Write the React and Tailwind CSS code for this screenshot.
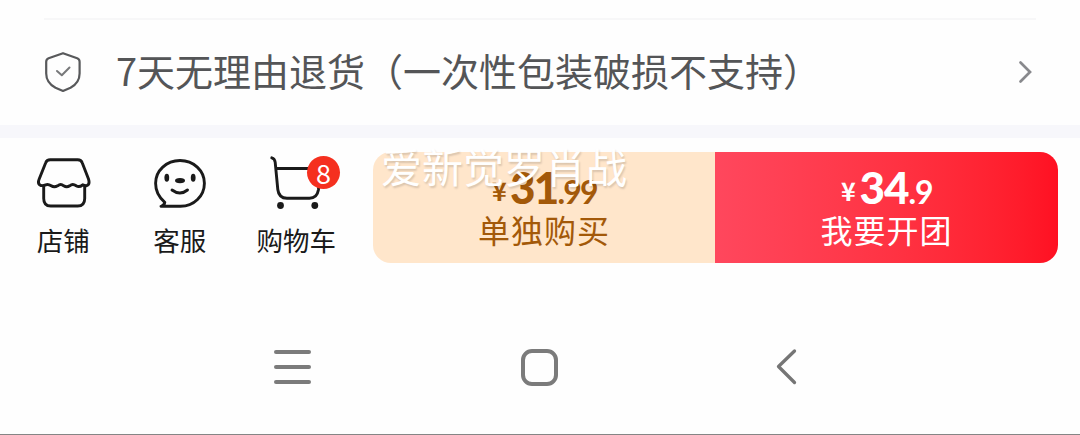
const tabs = [
  { label: '店铺', icon: ShopIcon },
  { label: '客服', icon: ServiceIcon },
  { label: '购物车', icon: CartIcon, badge: 8 },
]

function ShieldIcon() {
  return (
    <svg width="38" height="42" viewBox="0 0 38 42" fill="none" strokeLinecap="round" strokeLinejoin="round">
      <path
        d="M19 2.2 L33.2 7.2 Q35.6 8.1 35.6 10.8 V22.5 C35.6 30 32 33.8 26.5 36.8 L19 40 L11.5 36.8 C6 33.8 2.2 30 2.2 22.5 V10.8 Q2.2 8.1 4.6 7.2 Z"
        stroke="#58595b"
        strokeWidth="2.2"
      />
      <path d="M13 20 L17.8 24.3 L25.5 16.5" stroke="#77787a" strokeWidth="2" />
    </svg>
  )
}

function ShopIcon() {
  return (
    <svg width="56" height="54" viewBox="-1.2 0 56 54" fill="none" stroke="#1a1a1a" strokeWidth="2.9" strokeLinejoin="round">
      <path d="M14 4.8 H41.5 Q45 4.8 46 7.8 L52.3 24 Q54 29.5 50.5 30.7 Q48.5 30.8 46.5 29.8 Q43 32.8 40 30.8 Q36.5 28.3 33.5 30.8 Q30.5 32.8 27.5 30.8 Q24.5 28.3 21.5 30.8 Q18 32.8 15 30.8 Q12 28.8 9.5 29.8 Q6.5 31 4.5 30.5 Q1 29 3 24 L9.5 7.8 Q10.5 4.8 14 4.8 Z" />
      <path d="M7.5 30.5 V43.5 Q7.5 51 14.5 51 H41.5 Q48.5 51 48.5 43.5 V30.5" />
    </svg>
  )
}

function ServiceIcon() {
  return (
    <svg width="56" height="54" viewBox="-0.5 0 56 54" fill="none" stroke="#1a1a1a" strokeWidth="2.9" strokeLinecap="round" strokeLinejoin="round">
      <path d="M8.5 51.3 H28 C41.5 51.3 51.9 41 51.9 28.3 C51.9 15.5 41 5.5 27.5 5.5 C14 5.5 3.1 15.5 3.1 28.3 C3.1 36 6.5 42.5 12.3 47.3 Q11.8 50.5 8.5 51.3 Z" />
      <path d="M19.5 35 Q27.5 41 35 35" />
      <g fill="#1a1a1a" stroke="none">
        <ellipse cx="14.3" cy="22.8" rx="2.4" ry="4" />
        <ellipse cx="40.7" cy="22.8" rx="2.4" ry="4" />
        <ellipse cx="27.5" cy="25.6" rx="5" ry="2.7" />
      </g>
    </svg>
  )
}

function CartIcon() {
  return (
    <svg width="56" height="54" viewBox="-2 0 56 54" fill="none" stroke="#1a1a1a" strokeWidth="2.9" strokeLinecap="round" strokeLinejoin="round">
      <path d="M1.8 2.8 Q4.8 3.6 5.2 7.3 L7.8 34.5 Q8.8 43.2 17 43.2 H39.5 Q47 43.2 48.4 35 L51 13.5 H6.2" />
      <circle cx="10.5" cy="50.5" r="3.4" fill="#1a1a1a" stroke="none" />
      <circle cx="44.8" cy="50.5" r="3.4" fill="#1a1a1a" stroke="none" />
    </svg>
  )
}

function Price({ whole, cents, className }) {
  return (
    <div className={`flex items-baseline justify-center h-[40px] leading-[40px] font-[Lato] font-bold ${className}`}>
      <span className="relative -top-[3px] w-[15px] mr-[4px] text-[25px] font-['Noto_Sans_CJK_SC',sans-serif] font-bold">¥</span>
      <span className="text-[44px] font-black">{whole}</span>
      <span className="text-[32px]">.{cents}</span>
    </div>
  )
}

function App() {
  return (
    <div className="flex flex-col w-[1080px] h-[435px] overflow-hidden bg-[#fefefe] border-b border-[#858585] font-['Noto_Sans_CJK_SC',sans-serif]">
      {/* Return policy */}
      <div className="mx-[44px] mt-[18px] h-[107px] pb-[2px] border-t-2 border-[#f7f7f8] flex items-center">
        <ShieldIcon />
        <span className="-mt-[3px] ml-[34px] text-[38px] leading-[50px] text-[#545557] whitespace-nowrap">
          7天无理由退货（一次性包装破损不支持）
        </span>
        <svg className="ml-auto mr-1" width="14" height="24" viewBox="0 0 14 24" fill="none" stroke="#88898d" strokeWidth="2.7" strokeLinecap="round">
          <path d="M2.5 2.5 L12 12 L2.5 21.5" />
        </svg>
      </div>

      <div className="h-[13px] shrink-0 bg-[#f7f7fb]" />

      {/* Buy bar */}
      <div className="flex h-[162px] shrink-0 pt-[14px] pl-[5px]">
        {tabs.map(({ label, icon: Icon, badge }) => (
          <div key={label} className="relative w-[116.5px] pt-[3px] flex flex-col items-center">
            <Icon />
            <span className="mt-[11px] text-[26.5px] leading-[40px] text-[#1a1a1a]">{label}</span>
            {badge && (
              <span className="absolute left-[69px] top-[4px] w-[33px] h-[33px] rounded-full bg-[#f5301f] text-white text-[27px] leading-[33px] text-center">
                {badge}
              </span>
            )}
          </div>
        ))}

        <div className="relative ml-[18.5px] w-[685px] h-[111px] flex">
          <div className="w-[342px] rounded-l-[18px] bg-[#ffe6cb] text-[#a35909] text-center pt-[15px]">
            <Price whole="31" cents="99" className="tracking-[-1.8px]" />
            <div className="-mt-[2px] text-[32px] leading-[48px] tracking-[1px]">单独购买</div>
          </div>
          <div className="flex-1 rounded-r-[18px] bg-linear-to-r from-[#ff475d] to-[#ff1022] text-white text-center pt-[15px]">
            <Price whole="34" cents="9" className="tracking-[-1px]" />
            <div className="-mt-[2px] text-[32px] leading-[48px] tracking-[1px]">我要开团</div>
          </div>
          <span className="absolute left-[8px] top-[-17px] text-[41px] leading-[60px] text-white whitespace-nowrap [text-shadow:1px_2px_2px_rgba(0,0,0,0.15)]">
            爱新觉罗肖战
          </span>
        </div>
      </div>

      {/* System navigation */}
      <div className="flex items-center h-[134px] shrink-0 pl-[274px]">
        <div className="flex flex-col gap-[11px]">
          <div className="w-[37px] h-[4px] rounded-full bg-[#7b7b7b]" />
          <div className="w-[37px] h-[4px] rounded-full bg-[#7b7b7b]" />
          <div className="w-[37px] h-[4px] rounded-full bg-[#7b7b7b]" />
        </div>
        <div className="ml-[210px] w-[37px] h-[37px] rounded-[11px] border-4 border-[#7b7b7b]" />
        <svg className="ml-[218px]" width="22" height="38" viewBox="0 0 22 38" fill="none" stroke="#757575" strokeWidth="3.3" strokeLinecap="round" strokeLinejoin="round">
          <path d="M18.5 3 L2.5 18.5 L18.5 34.5" />
        </svg>
      </div>
    </div>
  )
}

export default App
